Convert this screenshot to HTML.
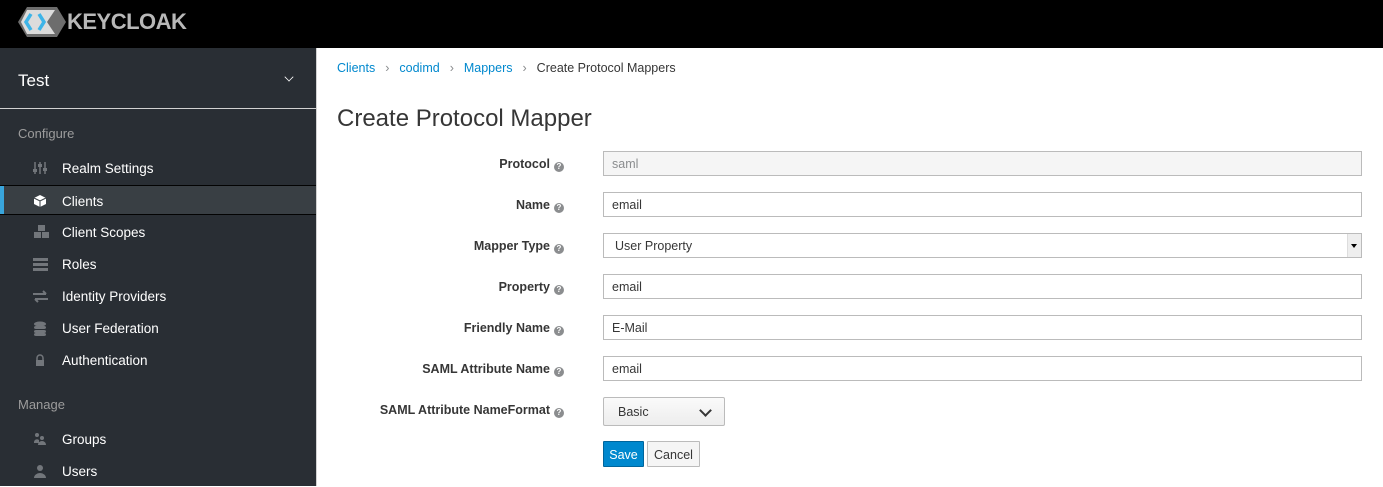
<!DOCTYPE html>
<html><head><style>
*{box-sizing:border-box;margin:0;padding:0}
body{width:1383px;height:486px;overflow:hidden;font-family:"Liberation Sans",sans-serif;background:#fff;position:relative}
.top{position:absolute;left:0;top:0;width:1383px;height:48px;background:#000}
.logo{position:absolute;left:18px;top:7px;height:30px;display:flex;align-items:center}
.logo span{color:#b8b8b8;font-weight:bold;font-size:22px;margin-left:1px;letter-spacing:-0.5px}
.side{position:absolute;left:0;top:48px;width:316px;height:438px;background:#292e34}
.edge{position:absolute;left:316px;top:48px;width:1px;height:438px;background:#d1d1d1}
.realm{position:absolute;left:18px;top:71px;color:#fff;font-size:17px}
.chev{position:absolute;left:285px;top:73px;width:8px;height:8px;border-right:1.5px solid #fff;border-bottom:1.5px solid #fff;transform:rotate(45deg) scale(.8)}
.sep{position:absolute;left:0;top:108px;width:316px;height:1px;background:#d1d1d1}
.sec{position:absolute;left:18px;color:#9c9c9c;font-size:13px}
.item{position:absolute;left:0;width:316px;height:30px;color:#fff;font-size:13.5px;line-height:31px;padding-left:62px}
.item svg{position:absolute;left:33px;top:8px}
.act{background:#393f44;border-top:1px solid #030303;border-bottom:1px solid #030303}
.act:before{content:"";position:absolute;left:0;top:0;width:4px;height:100%;background:#39a5dc}
.bc{position:absolute;left:337px;top:61px;font-size:12.5px;color:#363636}
.bc a{color:#0088ce;text-decoration:none}
.bc b{font-weight:normal;color:#8b8d8f;margin:0 10px}
h1{position:absolute;left:337px;top:105px;font-size:24px;font-weight:300;color:#363636}
.lbl{position:absolute;right:819px;font-size:12.5px;font-weight:bold;color:#363636;text-align:right;white-space:nowrap}
.lbl:after{content:"?";display:inline-block;width:10px;height:10px;border-radius:50%;background:#8b8d8f;color:#fff;font-size:8px;line-height:10px;text-align:center;margin-left:4px;vertical-align:-1px}
.in{position:absolute;left:603px;width:759px;height:25px;border:1px solid #bbb;font-size:12.5px;color:#363636;padding-left:8px;line-height:25px}
.dis{background:#f5f5f5;color:#8b8d8f}
.sel{padding-left:11px}
.sel:after{content:"";position:absolute;right:0;top:0;width:13px;height:23px;background:#eee;border-left:1px solid #ddd}
.sel:before{content:"";position:absolute;right:4px;top:10px;z-index:1;border:3px solid transparent;border-top:4px solid #000}
.bs{position:absolute;left:603px;top:397px;width:122px;height:29px;border:1px solid #bbb;border-radius:2px;background:linear-gradient(#fafafa,#ededed);font-size:12.5px;color:#363636;padding-left:14px;line-height:29px}
.bs:after{content:"";position:absolute;right:14px;top:8px;width:7px;height:7px;border-right:2px solid #363636;border-bottom:2px solid #363636;transform:rotate(45deg)}
.btn{position:absolute;top:441px;height:26px;font-size:12.5px;line-height:26px;text-align:center;border-radius:1px}
</style></head><body>
<div class="top"><div class="logo">
<svg width="48" height="30" viewBox="0 0 48 30"><polygon points="9,0 39,0 48,15 39,30 9,30 0,15" fill="#6d6d6d"/><polygon points="9,3 37,3 29,15 37,27 9,27 3,15" fill="#dcdcdc"/><path d="M13 7 L8 15 L13 23 M21 7 L26 15 L21 23" stroke="#3db4e8" stroke-width="3.5" fill="none"/></svg>
<span>KEYCLOAK</span></div></div>
<div class="side"></div><div class="edge"></div>
<div class="realm">Test</div><div class="chev"></div>
<div class="sep"></div>
<div class="sec" style="top:126px">Configure</div>
<div class="item" style="top:153px"><svg width="14" height="14"><g stroke="#72767b" stroke-width="1.5"><path d="M2 1v12M7 1v12M12 1v12"/></g><g fill="#72767b"><rect x="0" y="8" width="4" height="3"/><rect x="5" y="3" width="4" height="3"/><rect x="10" y="7" width="4" height="3"/></g></svg>Realm Settings</div>
<div class="item act" style="top:185px"><svg width="14" height="14"><path d="M7 1 L13 4 L13 10 L7 13 L1 10 L1 4Z" fill="#fff"/><path d="M1 4 L7 7 L13 4 M7 7 V13" stroke="#393f44" stroke-width="1" fill="none"/></svg>Clients</div>
<div class="item" style="top:217px"><svg width="18" height="14"><g fill="#72767b"><rect x="5" y="0" width="7" height="6"/><rect x="1" y="7" width="7" height="6"/><rect x="9" y="7" width="7" height="6"/></g></svg>Client Scopes</div>
<div class="item" style="top:249px"><svg width="15" height="14"><g fill="#72767b"><rect x="0" y="1" width="15" height="3"/><rect x="0" y="6" width="15" height="3"/><rect x="0" y="11" width="15" height="3"/></g></svg>Roles</div>
<div class="item" style="top:281px"><svg width="15" height="14"><g stroke="#72767b" stroke-width="2" fill="none"><path d="M0 5h13M10 2l3 3M15 10H2M5 13l-3-3"/></g></svg>Identity Providers</div>
<div class="item" style="top:313px"><svg width="14" height="15"><g fill="#72767b"><ellipse cx="7" cy="3" rx="6" ry="2.5"/><rect x="1" y="5" width="12" height="3" rx="2"/><rect x="1" y="9" width="12" height="3" rx="2"/><rect x="1" y="12" width="12" height="3" rx="2"/></g></svg>User Federation</div>
<div class="item" style="top:345px"><svg width="14" height="14"><path d="M4 7V5a3 3 0 0 1 6 0v2" stroke="#72767b" stroke-width="1.5" fill="none"/><rect x="3" y="7" width="8" height="6" fill="#72767b"/></svg>Authentication</div>
<div class="sec" style="top:397px">Manage</div>
<div class="item" style="top:424px"><svg width="14" height="14"><g fill="#72767b"><circle cx="4" cy="3" r="2"/><circle cx="9" cy="6" r="2"/><path d="M1 10a3 3 0 0 1 5-2v3H1z"/><path d="M5 13a4 4 0 0 1 8 0z"/></g></svg>Groups</div>
<div class="item" style="top:456px"><svg width="14" height="14"><g fill="#72767b"><circle cx="7" cy="4" r="3"/><path d="M1 14a6 5 0 0 1 12 0z"/></g></svg>Users</div>

<div class="bc"><a>Clients</a><b>›</b><a>codimd</a><b>›</b><a>Mappers</a><b>›</b>Create Protocol Mappers</div>
<h1>Create Protocol Mapper</h1>

<div class="lbl" style="top:157px">Protocol</div><div class="in dis" style="top:151px">saml</div>
<div class="lbl" style="top:198px">Name</div><div class="in" style="top:192px">email</div>
<div class="lbl" style="top:239px">Mapper Type</div><div class="in sel" style="top:233px">User Property</div>
<div class="lbl" style="top:280px">Property</div><div class="in" style="top:274px">email</div>
<div class="lbl" style="top:321px">Friendly Name</div><div class="in" style="top:315px">E-Mail</div>
<div class="lbl" style="top:362px">SAML Attribute Name</div><div class="in" style="top:356px">email</div>
<div class="lbl" style="top:403px">SAML Attribute NameFormat</div><div class="bs">Basic</div>
<div class="btn" style="left:603px;width:41px;background:#0088ce;border:1px solid #00659c;color:#fff">Save</div>
<div class="btn" style="left:647px;width:53px;background:#f5f5f5;border:1px solid #bbb;color:#363636">Cancel</div>
</body></html>
